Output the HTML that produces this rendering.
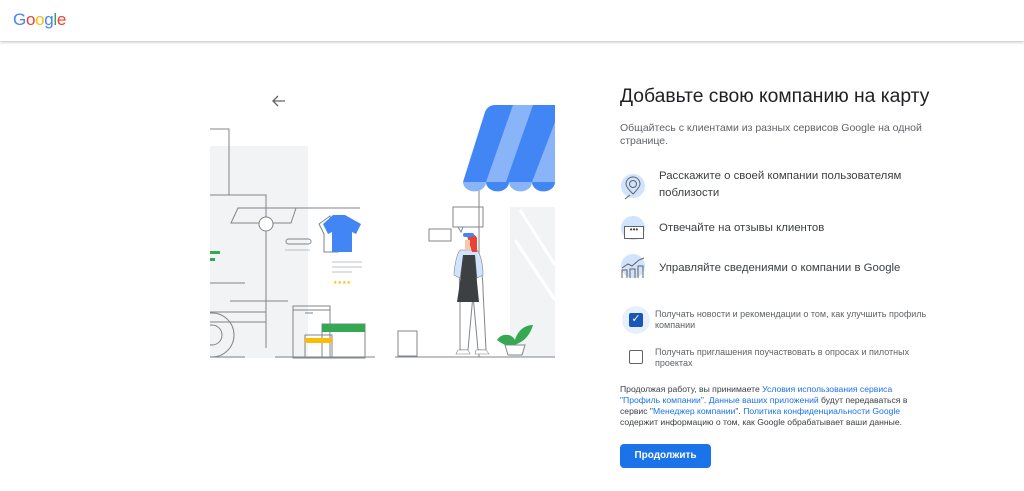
<!DOCTYPE html>
<html><head><meta charset="utf-8"><style>
*{margin:0;padding:0;box-sizing:border-box}
body{width:1024px;height:491px;background:#fff;font-family:"Liberation Sans",Arial,sans-serif;position:relative;overflow:hidden;color:#3c4043}
.hdr{position:absolute;left:0;top:0;width:1024px;height:41px;background:#fff;box-shadow:0 1px 3px rgba(60,64,67,.35)}
.logo{position:absolute;left:13px;top:10px;font-size:17px;letter-spacing:-.3px}
.a{position:absolute;white-space:nowrap}
h1{position:absolute;left:620px;top:86px;font-size:19.3px;font-weight:400;color:#202124;white-space:nowrap}
.sub{left:620px;font-size:10.5px;color:#5f6368}
.it{left:659px;font-size:11.4px;color:#3c4043;line-height:17px}
.ic{position:absolute;left:621px;width:24px;height:24px;border-radius:50%;background:#d2e3fc}
.cb{position:absolute;width:14px;height:14px;border:1.5px solid #5f6368;border-radius:2px}
.ct{left:655px;font-size:9px;color:#5f6368;line-height:11px}
.legal{position:absolute;left:620px;top:384px;width:300px;font-size:8.6px;line-height:11px;color:#3c4043}
.legal span{color:#1a73e8}
.btn{position:absolute;left:620px;top:444px;width:91px;height:24px;background:#1a73e8;border-radius:4px;color:#fff;font-size:10px;font-weight:bold;text-align:center;line-height:24px}
</style></head><body>
<div class="hdr"><div class="logo"><span style="color:#4285f4">G</span><span style="color:#ea4335">o</span><span style="color:#fbbc05">o</span><span style="color:#4285f4">g</span><span style="color:#34a853">l</span><span style="color:#ea4335">e</span></div></div>

<svg style="position:absolute;left:0;top:0" width="600" height="491">
<defs><clipPath id="c"><rect x="210" y="0" width="400" height="491"/></clipPath></defs>
<g fill="none" stroke="#5f6368" stroke-width="1.3"><path d="M285 101H273M278 96l-5 5 5 5"/></g>
<g clip-path="url(#c)">
<rect x="210" y="146" width="98" height="212" fill="#f1f3f4"/>
<rect x="510" y="207" width="45" height="150" fill="#f1f3f4"/>
<path d="M520 210l35 55M515 240l40 60" stroke="#fff" stroke-width="3"/>
<g fill="none" stroke="#80868b" stroke-width="1">
<path d="M210 129h19v66h-19M210 195h56v117H210M238 208h58l-5 15h-60z M266 208v140"/>
<path d="M210 283h35M230 301h58M210 312h56v10h-56"/>
<circle cx="212" cy="335" r="22"/><circle cx="212" cy="335" r="10"/>
<path d="M266 208h94"/>
<rect x="293" y="306" width="37" height="52"/><path d="M293 310h37M305 313h8"/>
<rect x="305" y="335" width="27" height="23"/>
<rect x="322" y="324" width="43" height="34"/>
<path d="M210 357h35M275 357h100M395 357h160"/>
<rect x="286" y="239" width="25" height="5" rx="2.5"/>
<path d="M479 182v175"/>
<rect x="453" y="207" width="30" height="20"/><path d="M458 227l3 5 2-5"/>
<rect x="429" y="229" width="22" height="12"/>
<rect x="398" y="331" width="19" height="25"/>
</g>
<circle cx="266" cy="224" r="7" fill="#fff" stroke="#80868b"/>
<path d="M285 250h25M332 262h30M332 267h30M332 272h20" stroke="#bdc1c6"/>
<text x="333" y="284" font-size="5" fill="#fbbc04">★★★★</text>
<rect x="210" y="251" width="10" height="3" fill="#34a853"/><rect x="210" y="258" width="5" height="3" fill="#34a853"/>
<rect x="322" y="324" width="43" height="8" fill="#34a853"/>
<rect x="305" y="338" width="27" height="5" fill="#fbbc04"/>
<path d="M330 216l-11 8 5 10v18h14z" fill="#fff" stroke="#80868b"/>
<path d="M333 215h12l16 9-5 10-4-2v20h-20v-20l-4 2-5-10z" fill="#4285f4"/>
<path d="M463 182l22-70q3-7 10-7h60v77z" fill="#4285f4"/>
<path d="M486 182l27-77h20l-27 77zM532 182l23-60v60z" fill="#8ab4f8"/>
<path d="M463 182a11 9 0 0 0 23 0z M509 182a11 9 0 0 0 23 0z" fill="#8ab4f8"/>
<path d="M486 182a11 9 0 0 0 23 0z M532 182a11 9 0 0 0 23 0z" fill="#4285f4"/>
<path d="M462 255c-3 10-3 25 -2 40v55h8l5-55 5 55h8l-3-60c0-15-3-30-8-35z" fill="#fff" stroke="#80868b"/>
<path d="M460 250c-4 5-6 20 -6 25l6 3 3-20h12l2 20 6-3c0-10-2-20-6-25z" fill="#d2e3fc" stroke="#80868b" stroke-width=".6"/>
<path d="M463 255h12l2 27 2 20h-22l3-20z" fill="#3c4043"/>
<path d="M467 236a6 6 0 0 1 10 2v14h-5z" fill="#ea4335"/>
<path d="M465 240v10h5v-10z" fill="#f6c7a8"/>
<rect x="463" y="233" width="11" height="4" rx="2" fill="#4285f4"/>
<path d="M458 350h10l2 4h-14zM476 350h10l3 4h-14z" fill="#fff" stroke="#80868b" stroke-width=".6"/>
<path d="M497 340c5-8 15-6 18 0c3-10 10-15 18-15c-3 10-8 15-14 18c-10 6-18 0-22-3z" fill="#34a853"/>
<path d="M505 345h20l-3 10h-14z" fill="#fff" stroke="#80868b"/>
</g>
</svg>

<h1>Добавьте свою компанию на карту</h1>
<div class="a sub" style="top:122px">Общайтесь с клиентами из разных сервисов Google на одной</div>
<div class="a sub" style="top:135px">странице.</div>

<div class="ic" style="top:174px"></div>
<div class="a it" style="top:168px">Расскажите о своей компании пользователям<br>поблизости</div>
<div class="ic" style="top:216px"></div>
<div style="position:absolute;left:624px;top:226px;width:20px;height:13px;border:1px solid #5f6368;background:#fff;font-size:8px;line-height:6px;text-align:center">•••</div>
<div class="a it" style="top:220px">Отвечайте на отзывы клиентов</div>
<div class="ic" style="top:254px"></div>
<div class="a it" style="top:260px">Управляйте сведениями о компании в Google</div>

<svg style="position:absolute;left:0;top:0" width="660" height="300">
<g transform="translate(621,174)" fill="none" stroke="#5f6368" stroke-width="1">
<circle cx="12" cy="10" r="3.5"/><path d="M12 20c-5-5-7-8-7-10a7 7 0 0 1 14 0c0 2-2 5-7 10z"/><path d="M4 25l5-4"/>
</g>
<g transform="translate(621,254)" fill="none" stroke="#5f6368" stroke-width="1">
<path d="M1 14l6-4 4 2 7-6 5-2M1 24v-8h5v8M9 24v-9h5v9M17 24v-12h5v12"/>
</g>
</svg>

<div style="position:absolute;left:622px;top:306px;width:28px;height:28px;border-radius:50%;background:#e8f0fe"></div>
<div class="cb" style="left:629px;top:313px;background:#1a56b8;border-color:#1a56b8;color:#fff;font-size:11px;line-height:11px;text-align:center">✓</div>
<div class="a ct" style="top:309px">Получать новости и рекомендации о том, как улучшить профиль<br>компании</div>
<div class="cb" style="left:629px;top:350px"></div>
<div class="a ct" style="top:347px">Получать приглашения поучаствовать в опросах и пилотных<br>проектах</div>

<div class="legal">Продолжая работу, вы принимаете <span>Условия использования сервиса "Профиль компании"</span>. <span>Данные ваших приложений</span> будут передаваться в сервис "<span>Менеджер компании</span>". <span>Политика конфиденциальности Google</span> содержит информацию о том, как Google обрабатывает ваши данные.</div>
<div class="btn">Продолжить</div>
</body></html>
